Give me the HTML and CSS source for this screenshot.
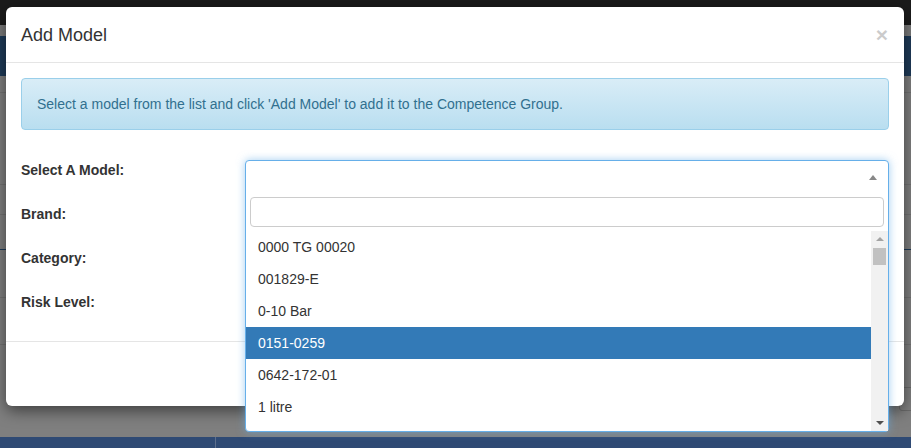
FILE: index.html
```html
<!DOCTYPE html>
<html>
<head>
<meta charset="utf-8">
<link rel="stylesheet" href="styles.css">
</head>
<body>
<div class="page">
  <div class="topbar"></div>
  <div class="gap-top"></div>
  <div class="navbar"></div>
  <div class="content">
    <div class="row r1"></div>
    <div class="row r2"></div>
    <div class="row r3"></div>
    <div class="row r4"></div>
    <div class="row r5"></div>
    <div class="row r6"></div>
    <div class="btn-ghost"></div>
  </div>
  <div class="footerbar"><div class="fb-left"></div><div class="fb-right"></div></div>
</div>

<div class="modal">
  <div class="modal-header">
    <h4 class="modal-title">Add Model</h4>
    <span class="close">&times;</span>
  </div>
  <div class="modal-body">
    <div class="alert">Select a model from the list and click 'Add Model' to add it to the Competence Group.</div>
    <div class="form-row"><label>Select A Model:</label></div>
    <div class="form-row"><label>Brand:</label></div>
    <div class="form-row"><label>Category:</label></div>
    <div class="form-row"><label>Risk Level:</label></div>
  </div>
  <div class="modal-footer"></div>
</div>

<div class="select2">
  <div class="selection"><span class="arrow"></span></div>
  <div class="search"><input type="text" class="search-input"></div>
  <div class="results">
    <ul class="list">
      <li>0000 TG 00020</li>
      <li>001829-E</li>
      <li>0-10 Bar</li>
      <li class="hl">0151-0259</li>
      <li>0642-172-01</li>
      <li>1 litre</li>
    </ul>
    <div class="scrollbar">
      <span class="sb-up"></span>
      <span class="sb-thumb"></span>
      <span class="sb-space"></span>
      <span class="sb-down"></span>
    </div>
  </div>
</div>
</body>
</html>
```

FILE: styles.css
```css
* { box-sizing: border-box; }
html, body { margin: 0; padding: 0; }
body {
  width: 911px;
  height: 448px;
  overflow: hidden;
  background: #7f7f7f;
  font-family: "Liberation Sans", Arial, Helvetica, sans-serif;
  font-size: 14px;
  color: #333;
  position: relative;
}
.page { display: flex; flex-direction: column; height: 448px; }
.topbar { height: 25px; background: #1b1b1b; }
.gap-top { height: 11px; background: #7b7b7b; }
.navbar { height: 40px; background: #1e3a58; }
.content { flex: 1; position: relative; background: #7f7f7f; }
.row { border-bottom: 1px solid #727272; }
.r1 { height: 17px; }
.r2 { height: 92px; }
.r3 { height: 30px; }
.r4 { height: 35px; border-bottom-color: #1e3a58; }
.r5 { height: 48px; }
.r6 { height: 47px; }
.btn-ghost {
  position: absolute; right: -10px; top: 311px;
  width: 22px; height: 24px;
  border: 1px solid #6a6a6a; border-radius: 3px;
}
.footerbar { height: 11px; background: #2f4a74; display: flex; }
.fb-left { width: 216px; border-right: 1px solid #5d6f8d; }
.fb-right { flex: 1; }

.modal {
  position: absolute;
  left: 6px; top: 7px;
  width: 898px; height: 399px;
  background: #fff;
  border-radius: 6px;
  box-shadow: 0 5px 15px rgba(0,0,0,0.5);
  display: flex; flex-direction: column;
}
.modal-header {
  height: 56px;
  padding: 15px 15px;
  border-bottom: 1px solid #e5e5e5;
  display: flex; justify-content: space-between; align-items: flex-start;
}
.modal-title {
  margin: 0; font-size: 18px; font-weight: normal; line-height: 25px; color: #333;
  padding-top: 1px;
}
.close {
  font-size: 21px; font-weight: bold; line-height: 1; color: #000; opacity: 0.2;
  margin-right: 1px; margin-top: 2px;
}
.modal-body { padding: 15px 15px 0; height: 278px; }
.alert {
  height: 52px;
  padding: 15px 15px;
  border: 1px solid #9acfea;
  border-radius: 4px;
  background: linear-gradient(to bottom, #d9edf7 0%, #b9def0 100%);
  color: #31708f;
  font-size: 14px; line-height: 20px;
  margin-bottom: 20px;
}
.form-row { height: 44px; padding-top: 10px; }
.form-row label { font-weight: bold; font-size: 14px; line-height: 20px; color: #333; }
.modal-footer { flex: 1; border-top: 1px solid #e5e5e5; }

.select2 {
  position: absolute;
  left: 245px; top: 160px;
  width: 644px; height: 272px;
  border: 1px solid #66afe9;
  border-radius: 4px;
  background: #fff;
  box-shadow: 0 0 8px rgba(102,175,233,0.6);
  display: flex; flex-direction: column;
}
.selection { height: 32px; position: relative; }
.arrow {
  position: absolute; right: 11px; top: 14px;
  width: 0; height: 0;
  border-left: 4px solid transparent; border-right: 4px solid transparent;
  border-bottom: 5px solid #888;
}
.search { padding: 4px 4px; height: 38px; }
.search-input {
  display: block; width: 100%; height: 30px;
  border: 1px solid #ccc; border-radius: 4px;
  margin: 0; padding: 4px 6px; outline: none;
  font-family: inherit; font-size: 14px;
}
.results { height: 200px; display: flex; overflow: hidden; }
.list { list-style: none; margin: 0; padding: 0; flex: 1; }
.list li {
  height: 32px; line-height: 20px; padding: 6px 12px;
  font-size: 14px; color: #333;
}
.list li.hl { background: #337ab7; color: #fff; }
.scrollbar {
  width: 17px; background: #f1f1f1;
  display: flex; flex-direction: column; align-items: center;
}
.sb-up {
  margin-top: 6px; width: 0; height: 0;
  border-left: 4px solid transparent; border-right: 4px solid transparent;
  border-bottom: 4px solid #a3a3a3;
}
.sb-thumb { margin-top: 7px; width: 13px; height: 17px; background: #c1c1c1; }
.sb-space { flex: 1; }
.sb-down {
  margin-bottom: 6px; width: 0; height: 0;
  border-left: 4px solid transparent; border-right: 4px solid transparent;
  border-top: 4px solid #505050;
}
```
